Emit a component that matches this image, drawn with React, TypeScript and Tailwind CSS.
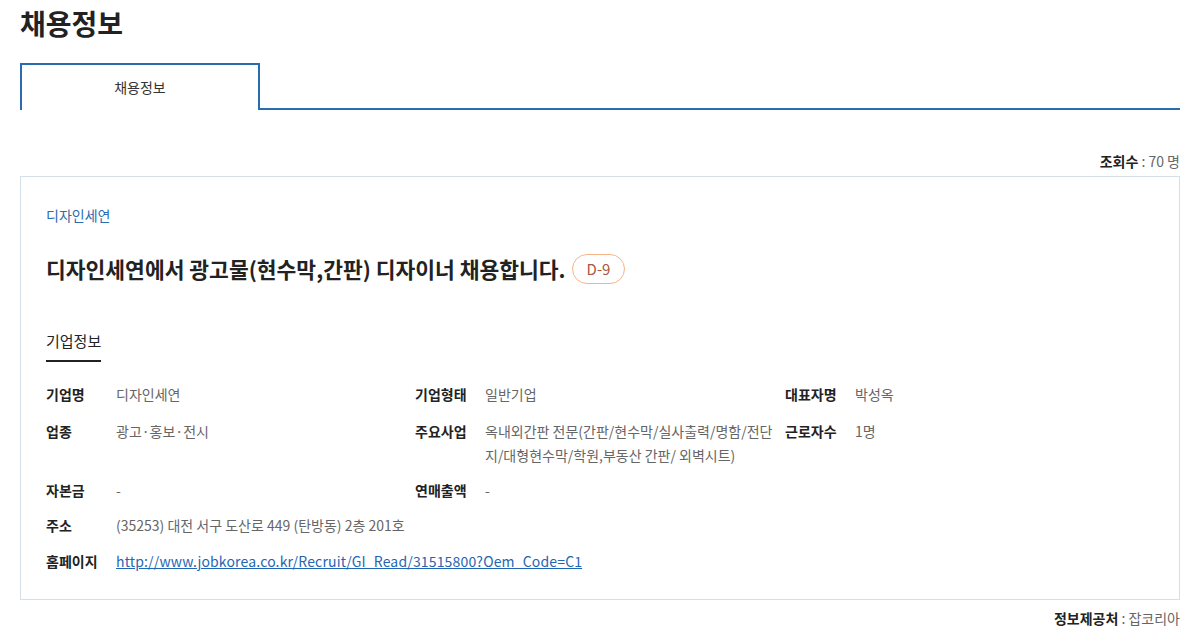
function Label({ children }: { children: React.ReactNode }) {
  return <div className="font-bold text-[14px] text-[#222]">{children}</div>
}

function Value({ children, span }: { children: React.ReactNode; span?: string }) {
  return <div className={`text-[14px] text-[#666] ${span ?? ''}`}>{children}</div>
}

export default function App() {
  return (
    <div
      className="pl-5 pr-[10px] bg-white text-[#222] min-h-[633px]"
      style={{ fontFamily: '"Noto Sans CJK KR", "Noto Sans", sans-serif' }}
    >
      <h1 className="text-[28px] font-bold leading-[38px] pt-[4px] text-[#222]">채용정보</h1>

      <div className="mt-[21px] flex items-end">
        <div className="w-[240px] h-[47px] border-2 border-b-0 border-[#2a6cb0] flex items-center justify-center text-[14px] text-[#333]">
          채용정보
        </div>
        <div className="flex-1 border-b-2 border-[#2a6cb0]" />
      </div>

      <div className="mt-[41px] text-right text-[14px] text-[#666] leading-[20px]">
        <span className="font-bold text-[#222]">조회수</span> : 70 명
      </div>

      <div className="mt-[5px] border border-[#d5dfe8] px-[25px] pt-[27px] pb-[26px]">
        <div className="text-[14px] text-[#2a6cb0] leading-[22px]">디자인세연</div>
        <div className="mt-[27px] flex items-center gap-[6px]">
          <h2 className="text-[21.5px] font-bold leading-[32px] text-[#222]">
            디자인세연에서 광고물(현수막,간판) 디자이너 채용합니다.
          </h2>
          <span className="h-[30px] px-[14px] rounded-full border border-[#f6b487] text-[15px] text-[#a8583c] flex items-center">
            D-9
          </span>
        </div>

        <div className="mt-[45px] inline-block">
          <div className="text-[15px] leading-[22px] pb-[8px] border-b-2 border-[#222] text-[#222]">기업정보</div>
        </div>

        <div className="mt-[20px] grid grid-cols-[70px_299px_70px_300px_70px_1fr] gap-y-[11px] leading-[24px]">
          <Label>기업명</Label>
          <Value>디자인세연</Value>
          <Label>기업형태</Label>
          <Value>일반기업</Value>
          <Label>대표자명</Label>
          <Value>박성옥</Value>

          <div className="font-bold text-[14px] text-[#222] pt-[2px]">업종</div>
          <div className="text-[14px] text-[#666] pt-[2px]">광고·홍보·전시</div>
          <div className="font-bold text-[14px] text-[#222] pt-[2px]">주요사업</div>
          <div className="text-[14px] text-[#666] pt-[2px]">
            옥내외간판 전문(간판/현수막/실사출력/명함/전단지/대형현수막/학원,부동산 간판/ 외벽시트)
          </div>
          <div className="font-bold text-[14px] text-[#222] pt-[2px]">근로자수</div>
          <div className="text-[14px] text-[#666] pt-[2px]">1명</div>

          <Label>자본금</Label>
          <Value>-</Value>
          <Label>연매출액</Label>
          <Value span="col-span-3">-</Value>

          <Label>주소</Label>
          <Value span="col-span-5">(35253) 대전 서구 도산로 449 (탄방동) 2층 201호</Value>

          <div className="font-bold text-[14px] text-[#222] pt-[1px]">홈페이지</div>
          <div className="col-span-5 text-[14px] pt-[1px]">
            <a href="#" className="text-[#1f66b3] underline tracking-[0.16px]">
              http://www.jobkorea.co.kr/Recruit/GI_Read/31515800?Oem_Code=C1
            </a>
          </div>
        </div>
      </div>

      <div className="mt-[8px] text-right text-[14px] text-[#666] leading-[20px]">
        <span className="font-bold text-[#222]">정보제공처</span> : 잡코리아
      </div>
    </div>
  )
}
